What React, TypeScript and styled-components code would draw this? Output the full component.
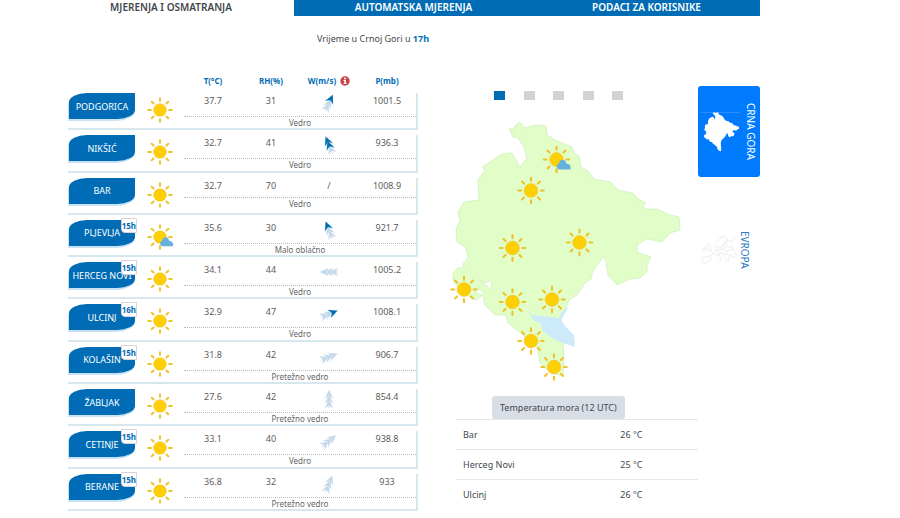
import React from "react";
import styled, { createGlobalStyle } from "styled-components";

const GlobalStyle = createGlobalStyle`
  *, *::before, *::after { box-sizing: border-box; }
  body {
    margin: 0;
    background: #fff;
    color: #43484d;
    font: 9px/15px "Noto Sans", "Open Sans", sans-serif;
  }
  button { font: inherit; border: 0; cursor: pointer; }
  a { text-decoration: none; }
`;

const blue = "#006cb5";

const Page = styled.div`
  padding: 0 140px 7px 48px;
`;

const Tabs = styled.nav`
  display: grid;
  grid-template-columns: 246fr 233fr 233fr;
`;

const Tab = styled.a<{ $active?: boolean }>`
  padding: 0 0 1px ${(p) => (p.$active ? "0" : "6px")};
  text-align: center;
  font-size: 10px;
  font-weight: 600;
  color: ${(p) => (p.$active ? "#43484d" : "#fff")};
  background: ${(p) => (p.$active ? "#fff" : blue)};
`;

const Main = styled.main`
  display: grid;
  grid-template-columns: 1fr 62px;
`;

const Content = styled.div`
  min-width: 0;
`;

const Title = styled.h1`
  margin: 15px 0 27px;
  text-align: center;
  font-size: 9px;
  font-weight: 400;

  strong { color: ${blue}; }
`;

const Columns = styled.div`
  display: grid;
  grid-template-columns: 350fr 250fr;
  column-gap: 30px;
  align-items: start;
  padding-left: 20px;
`;

const Stations = styled.table`
  display: grid;
  grid-template-rows: 15px repeat(10, 1fr);
  row-gap: 5px;
  min-height: 438px;
`;

const stationColumns = "67px 49px repeat(4, 1fr)";

const StationHead = styled.thead`
  padding-right: 2px;
`;

const HeadRow = styled.tr`
  display: grid;
  grid-template-columns: ${stationColumns};
`;

const HeadCell = styled.th`
  display: flex;
  align-items: center;
  justify-content: center;
  gap: 4px;
  padding: 0;
  font-size: 8px;
  color: ${blue};
  white-space: nowrap;
`;

const Station = styled.tbody<{ $calm: boolean }>`
  display: grid;
  grid-template-columns: ${stationColumns};
  grid-template-rows: ${(p) => (p.$calm ? "19px" : "23px")} 1fr;
  border: solid #d6e8ee;
  border-width: 0 2px 2px 0;
`;

const Row = styled.tr`
  display: contents;
`;

const NameCell = styled.th`
  grid-row: 1 / span 2;
  padding: 0 0 0 1px;
`;

const IconCell = styled.td`
  grid-row: 1 / span 2;
  padding: 3px 0 0;
  text-align: center;

  svg { display: block; margin: 0 auto; }
`;

const Name = styled.a`
  position: relative;
  display: flex;
  align-items: center;
  justify-content: center;
  height: 26px;
  color: #fff;
  font-weight: 400;
  white-space: nowrap;
  background: ${blue};
  border-radius: 18px 0 18px 0 / 9px 0 9px 0;
  box-shadow: -1px 2px 0 #c9e1f5;
`;

const Hour = styled.span`
  position: absolute;
  top: -2px;
  right: -2px;
  font-size: 8px;
  line-height: 13px;
  font-weight: 700;
  color: ${blue};
  background: #fff;
  border: 1px solid #d9d3da;
  border-radius: 0 0 0 4px;
`;

const Value = styled.td`
  display: flex;
  justify-content: center;
  padding: 0;
  line-height: 16px;
  color: #5c5c5c;
`;

const Condition = styled.td`
  grid-column: 3 / -1;
  padding: 0;
  border-top: 1px dotted #bbb;
  text-align: center;
  font-size: 8px;
  line-height: 11px;
  color: #666;
`;

const MapColumn = styled.section`
  padding-top: 18px;
`;

const Dots = styled.div`
  display: flex;
  justify-content: space-between;
  width: 129px;
  margin: 0 0 18px 46px;
`;

const Dot = styled.button<{ $active?: boolean }>`
  width: 11px;
  height: 9px;
  padding: 0;
  background: ${(p) => (p.$active ? blue : "#d2d2d2")};
`;

const MapDrawing = styled.svg`
  display: block;
  width: 240px;
  max-width: 100%;
`;

const Sea = styled.div`
  padding-left: 8px;
`;

const SeaButton = styled.button`
  display: block;
  margin: 12px 0 0 36px;
  padding: 4px 8px;
  color: #43484d;
  background: #d9dee6;
  border-radius: 3px;
`;

const SeaTable = styled.table`
  width: 100%;
  table-layout: fixed;
  border-collapse: collapse;
`;

const SeaCell = styled.td`
  width: 35%;
  padding: 7px;
  border-top: 1px solid #e4e6e9;
  text-align: left;
  font-weight: 400;
`;

const SeaName = styled(SeaCell).attrs({ as: "th", scope: "row" })`
  width: 65%;
`;

const Side = styled.aside`
  display: flex;
  flex-direction: column;
  gap: 27px;
  padding-top: 70px;
`;

const Region = styled.button<{ $active?: boolean }>`
  display: flex;
  align-items: center;
  height: 91px;
  padding: 0 0 0 3px;
  border-radius: 3px;
  font-size: 10px;
  color: ${(p) => (p.$active ? "#fff" : "#2f7ac0")};
  background: ${(p) => (p.$active ? "#007bff" : "transparent")};

  span { writing-mode: vertical-rl; }
`;

const COUNTRY =
  "M509 129 513 129 516 125 519 122 525 128 535 125 546 126 547 135 557 141 572 147 574 153 579 156 581 167 588 171 594 179 611 182 618 190 633 193 638 199 646 203 642 207 648 209 657 209 670 215 679 217 680 230 670 233 662 242 647 239 637 245 637 252 651 257 647 265 647 272 640 278 630 279 617 285 608 275 606 262 604 257 597 265 592 273 592 278 585 283 577 295 569 300 561 320 563 343 564 360 563 375 552 374 540 363 537 348 523 335 508 323 506 315 495 315 485 305 483 295 476 300 468 296 458 288 453 280 453 273 458 268 464 267 463 264 468 258 466 248 457 242 456 230 460 220 458 212 464 202 479 200 478 180 485 170 482 167 502 154 512 153 520 167 527 158 524 147 518 138 513 137 511 132Z";

type Sky = "sun" | "cloudy";

function SunShape({ x, y, sky, scale = 1 }: { x: number; y: number; sky: Sky; scale?: number }) {
  return (
    <g transform={`translate(${x} ${y}) scale(${scale})`}>
      {[0, 45, 90, 135, 180, 225, 270, 315].map((a) => (
        <path key={a} d="M0-9.300V-12" stroke="#efc22a" strokeWidth="2" strokeLinecap="round" transform={`rotate(${a})`} />
      ))}
      <circle r="6.500" fill="#ffcf06" stroke="#eec83c" strokeWidth=".6" />
      {sky === "cloudy" && (
        <path d="M2 9.500a3 3 0 0 1 0-5.600Q3 0 6.500 0.300 9 1 9.500 4q3.500.200 3.800 3V9.500Z" fill="#65b3dd" />
      )}
    </g>
  );
}

function SkyIcon({ sky }: { sky: Sky }) {
  return (
    <svg width="28" height="28" viewBox="-14 -14 28 28" aria-hidden="true">
      <SunShape x={0} y={0} sky={sky} scale={0.98} />
    </svg>
  );
}

function Wind({ angle, dark }: { angle: number; dark: number }) {
  return (
    <svg width="20" height="20" viewBox="-10 -10 20 20" aria-hidden="true">
      <g transform={`rotate(${angle})`}>
        <path d="M0-3V9" stroke="#c4d8ea" strokeWidth="1" />
        {[0, 1, 2].map((i) => (
          <path
            key={i}
            d="M0-9.500 4.500 0 0-3-4.500 0Z"
            transform={`translate(0 ${(2 - i) * 4.7})`}
            fill={2 - i < dark ? blue : "#c4d8ea"}
            stroke="#fff"
            strokeWidth=".2"
          />
        ))}
      </g>
    </svg>
  );
}

function InfoIcon() {
  return (
    <svg width="10" height="10" viewBox="0 0 10 10" role="img" aria-label="Info">
      <circle cx="5" cy="5" r="4.700" fill="#c9434b" />
      <path d="M4 1.700h2v1.500H4zM3.500 4h2.400v3h.7v1H3.500V7h.7V5h-.7z" fill="#fff" />
    </svg>
  );
}

const mapPoints: { x: number; y: number; sky: Sky }[] = [
  { x: 556.5, y: 159.5, sky: "cloudy" },
  { x: 531, y: 190.5, sky: "sun" },
  { x: 512.5, y: 248, sky: "sun" },
  { x: 579.5, y: 242.5, sky: "sun" },
  { x: 464, y: 289.5, sky: "sun" },
  { x: 512.5, y: 302, sky: "sun" },
  { x: 552, y: 299.5, sky: "sun" },
  { x: 531, y: 341, sky: "sun" },
  { x: 554, y: 367, sky: "sun" },
];

function CountryMap() {
  return (
    <MapDrawing viewBox="448 118 240 266" role="img" aria-label="Crna Gora">
      <path d={COUNTRY} fill="#e1fec8" stroke="#cdecb8" strokeWidth=".7" strokeLinejoin="round" />
      <path d="M479 280 485 283 491 281V290L486 285ZM476 288 485 293 482 295 476 293Z" fill="#fff" stroke="#cdecb8" strokeWidth=".6" />
      <path d="M528 309 532 315 550 317 559 318 562 312 569 306 561 320 565 326 574 335 575 347 560 342 549 336 543 331 540 323 533 320Z" fill="#cdeafa" />
      {mapPoints.map((p) => (
        <SunShape key={`${p.x}-${p.y}`} {...p} scale={1.06} />
      ))}
    </MapDrawing>
  );
}

function MiniCountry() {
  return (
    <svg width="42" height="44" viewBox="0 0 42 44" aria-hidden="true">
      <path d="M0 2.500H39" stroke="#3f98ff" strokeWidth=".7" />
      <path d={COUNTRY} fill="#fff" transform="translate(3 2) scale(.155) translate(-453 -122)" />
    </svg>
  );
}

function MiniEurope() {
  return (
    <svg width="36" height="34" viewBox="0 0 40 34" fill="none" stroke="#e2e2e2" strokeWidth=".7" strokeLinejoin="round" aria-hidden="true">
      <path d="M17 15 15 11 19 7 22 3 27 2 29 5 26 9 24 12 22 15 20 13 17 15M24 12 28 11 29 6 35 8 37 3M6 12 9 10 11 14 12 18 8 18 6 12M3 15 5 14 5 17 2 18ZM2 25 9 24 13 21 18 17 24 16 29 18 35 16M2 25 1 31 6 32 10 29 11 25M13 21 17 23 20 22 23 28 20 30M22 22 27 26 28 30 31 29 30 25 37 25 39 21 35 16 34 11M18 17 19 21 25 20 27 24M29 18 28 22 33 23 35 21M24 16 29 13 34 14" />
    </svg>
  );
}

interface StationData {
  name: string;
  hour?: string;
  sky: Sky;
  t: string;
  rh: string;
  wind?: { angle: number; dark: number };
  p: string;
  text: string;
}

const stations: StationData[] = [
  { name: "PODGORICA", sky: "sun", t: "37.7", rh: "31", wind: { angle: 25, dark: 1 }, p: "1001.5", text: "Vedro" },
  { name: "NIKŠIĆ", sky: "sun", t: "32.7", rh: "41", wind: { angle: -22, dark: 2 }, p: "936.3", text: "Vedro" },
  { name: "BAR", sky: "sun", t: "32.7", rh: "70", p: "1008.9", text: "Vedro" },
  { name: "PLJEVLJA", hour: "15h", sky: "cloudy", t: "35.6", rh: "30", wind: { angle: -22, dark: 1 }, p: "921.7", text: "Malo oblačno" },
  { name: "HERCEG NOVI", hour: "15h", sky: "sun", t: "34.1", rh: "44", wind: { angle: -90, dark: 0 }, p: "1005.2", text: "Vedro" },
  { name: "ULCINJ", hour: "16h", sky: "sun", t: "32.9", rh: "47", wind: { angle: 68, dark: 1 }, p: "1008.1", text: "Vedro" },
  { name: "KOLAŠIN", hour: "15h", sky: "sun", t: "31.8", rh: "42", wind: { angle: 68, dark: 0 }, p: "906.7", text: "Pretežno vedro" },
  { name: "ŽABLJAK", sky: "sun", t: "27.6", rh: "42", wind: { angle: 0, dark: 0 }, p: "854.4", text: "Pretežno vedro" },
  { name: "CETINJE", hour: "15h", sky: "sun", t: "33.1", rh: "40", wind: { angle: 50, dark: 0 }, p: "938.8", text: "Vedro" },
  { name: "BERANE", hour: "15h", sky: "sun", t: "36.8", rh: "32", wind: { angle: 22, dark: 0 }, p: "933", text: "Pretežno vedro" },
];

const seaTemperatures = [
  ["Bar", "26 °C"],
  ["Herceg Novi", "25 °C"],
  ["Ulcinj", "26 °C"],
];

export default function App() {
  return (
    <>
      <GlobalStyle />
      <Page>
        <Tabs>
          <Tab href="#mjerenja" $active>MJERENJA I OSMATRANJA</Tab>
          <Tab href="#automatska">AUTOMATSKA MJERENJA</Tab>
          <Tab href="#podaci">PODACI ZA KORISNIKE</Tab>
        </Tabs>
        <Main>
          <Content>
            <Title>Vrijeme u Crnoj Gori u <strong>17h</strong></Title>
            <Columns>
              <Stations>
                <StationHead>
                  <HeadRow>
                    <td />
                    <td />
                    <HeadCell scope="col">T(°C)</HeadCell>
                    <HeadCell scope="col">RH(%)</HeadCell>
                    <HeadCell scope="col">W(m/s)<InfoIcon /></HeadCell>
                    <HeadCell scope="col">P(mb)</HeadCell>
                  </HeadRow>
                </StationHead>
                {stations.map((s) => (
                  <Station key={s.name} $calm={!s.wind}>
                    <Row>
                      <NameCell scope="row" rowSpan={2}>
                        <Name href="#stanica">
                          {s.name}
                          {s.hour && <Hour>{s.hour}</Hour>}
                        </Name>
                      </NameCell>
                      <IconCell rowSpan={2}><SkyIcon sky={s.sky} /></IconCell>
                      <Value>{s.t}</Value>
                      <Value>{s.rh}</Value>
                      <Value>{s.wind ? <Wind {...s.wind} /> : "/"}</Value>
                      <Value>{s.p}</Value>
                    </Row>
                    <Row>
                      <Condition colSpan={4}>{s.text}</Condition>
                    </Row>
                  </Station>
                ))}
              </Stations>
              <MapColumn>
                <Dots>
                  {[1, 2, 3, 4, 5].map((n) => (
                    <Dot key={n} $active={n === 1} aria-label={String(n)} />
                  ))}
                </Dots>
                <CountryMap />
                <Sea>
                  <SeaButton>Temperatura mora (12 UTC)</SeaButton>
                  <SeaTable>
                    <tbody>
                      {seaTemperatures.map(([place, value]) => (
                        <tr key={place}>
                          <SeaName>{place}</SeaName>
                          <SeaCell>{value}</SeaCell>
                        </tr>
                      ))}
                    </tbody>
                  </SeaTable>
                </Sea>
              </MapColumn>
            </Columns>
          </Content>
          <Side>
            <Region $active><MiniCountry /><span>CRNA GORA</span></Region>
            <Region><MiniEurope /><span>EVROPA</span></Region>
          </Side>
        </Main>
      </Page>
    </>
  );
}
